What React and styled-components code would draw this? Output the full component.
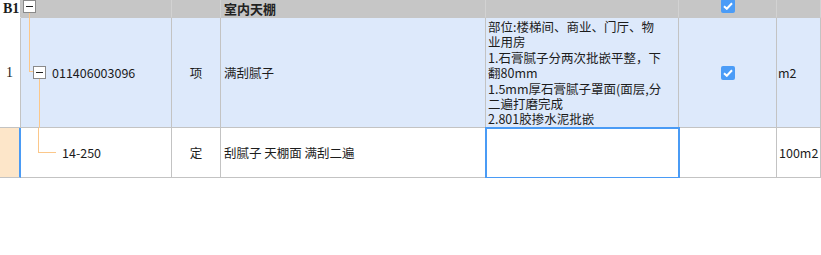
import React from 'react';
import styled, { createGlobalStyle } from 'styled-components';

const GlobalStyle = createGlobalStyle`
  html, body { margin: 0; padding: 0; background: #ffffff; }
  body { font-family: "Noto Sans CJK SC", "Liberation Sans", sans-serif; font-size: 12.5px; color: #1c1c1c; }
`;

const Grid = styled.div`
  display: grid;
  grid-template-columns: 21px 151px 49px 265px 193px 98px 1fr;
  grid-template-rows: 18px 110px 50px;
  width: 821px;
`;

const Cell = styled.div`
  position: relative;
  box-sizing: border-box;
  display: flex;
  align-items: ${p => p.$top ? 'flex-start' : 'center'};
  justify-content: ${p => p.$center ? 'center' : 'flex-start'};
  padding-left: ${p => p.$pad ?? 3}px;
  background: ${p => p.$bg || 'transparent'};
  border-right: 1px solid ${p => p.$line || '#c3c3c3'};
  border-bottom: 1px solid #c3c3c3;
  white-space: nowrap;
  overflow: visible;
`;

const HeadCell = styled(Cell)`
  background: ${p => p.$bg || '#c6c6c6'};
  border-right-color: ${p => p.$line || '#d2d2d2'};
  border-bottom-color: #c6c6c6;
  font-weight: 700;
  font-size: 13px;
  color: #222;
`;

const RowTag = styled(Cell)`
  font-family: "Liberation Serif", serif;
  font-size: 14px;
  font-weight: ${p => p.$bold ? 700 : 400};
  border-right: ${p => p.$mark ? '2px solid #4a9bf5' : '1px solid #c3c3c3'};
  border-bottom-color: ${p => p.$noBottom ? 'transparent' : '#c3c3c3'};
`;

const Selected = styled(Cell)`
  outline: 2px solid #4a9bf5;
  outline-offset: -1px;
  z-index: 1;
`;

const Desc = styled.div`
  padding-top: 1px;
  line-height: 15.4px;
`;

const Guide = styled.span`
  position: absolute;
  background: #fbc78a;
  left: ${p => p.$x}px;
  top: ${p => p.$y}px;
  width: ${p => p.$w ?? 1}px;
  height: ${p => p.$h ?? 1}px;
`;

const Toggle = styled.span`
  position: relative;
  z-index: 1;
  box-sizing: border-box;
  width: 13px;
  height: 13px;
  flex: none;
  border: 1px solid #8a8a8a;
  background: #ffffff;
  display: flex;
  align-items: center;
  justify-content: center;
  margin-right: ${p => p.$gap ?? 0}px;
  &::after {
    content: "";
    width: 7px;
    height: 1px;
    background: #222;
  }
`;

const CheckBox = styled.span`
  width: 14px;
  height: 14px;
  border-radius: 2px;
  background: #4b9cf7;
  display: flex;
  align-items: center;
  justify-content: center;
  margin-top: ${p => p.$shift ?? 0}px;
`;

const Check = ({ shift }) => (
  <CheckBox $shift={shift}>
    <svg width="10" height="8" viewBox="0 0 10 8">
      <path d="M1 4.2 L3.8 6.8 L9 1.3" fill="none" stroke="#fff" strokeWidth="2" />
    </svg>
  </CheckBox>
);

const descLines = [
  '部位:楼梯间、商业、门厅、物',
  '业用房',
  '1.石膏腻子分两次批嵌平整，下',
  '翻80mm',
  '1.5mm厚石膏腻子罩面(面层,分',
  '二遍打磨完成',
  '2.801胶掺水泥批嵌',
];

export default function App() {
  return (
    <>
      <GlobalStyle />
      <Grid>
        <RowTag $bold $pad={3} $bg="#ffffff" $noBottom>B1</RowTag>
        <HeadCell $pad={2} $top>
          <Toggle />
          <Guide $x={8} $y={13} $h={5} />
        </HeadCell>
        <HeadCell />
        <HeadCell>室内天棚</HeadCell>
        <HeadCell />
        <HeadCell $center $pad={0} $top><Check shift={-1} /></HeadCell>
        <HeadCell />

        <RowTag $pad={6}>1</RowTag>
        <Cell $bg="#dde9fb" $pad={12}>
          <Guide $x={8} $y={0} $h={54} />
          <Guide $x={8} $y={53} $w={5} />
          <Guide $x={18} $y={61} $h={49} />
          <Toggle $gap={6} />
          011406003096
        </Cell>
        <Cell $bg="#dde9fb" $center $pad={0}>项</Cell>
        <Cell $bg="#dde9fb">满刮腻子</Cell>
        <Cell $bg="#dde9fb" $top $pad={2}>
          <Desc>{descLines.map(l => <div key={l}>{l}</div>)}</Desc>
        </Cell>
        <Cell $bg="#dde9fb" $center $pad={0}><Check /></Cell>
        <Cell $bg="#dde9fb" $pad={1}>m2</Cell>

        <RowTag $bg="#fde6c9" $mark />
        <Cell $pad={41}>
          <Guide $x={17} $y={0} $h={25} />
          <Guide $x={17} $y={24} $w={18} />
          14-250
        </Cell>
        <Cell $center $pad={0}>定</Cell>
        <Cell>刮腻子 天棚面 满刮二遍</Cell>
        <Selected />
        <Cell />
        <Cell $pad={2}>100m2</Cell>
      </Grid>
    </>
  );
}
